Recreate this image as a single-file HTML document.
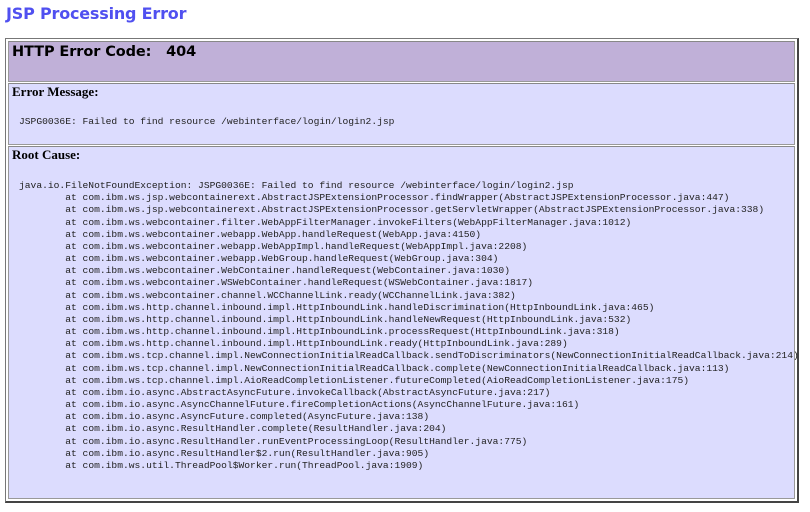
<!DOCTYPE html>
<html><head><style>
body{margin:0;background:#fff;width:810px;height:512px;position:relative;overflow:hidden}
.t{position:absolute;left:6px;top:4px;font:bold 16px "DejaVu Sans","Liberation Sans",sans-serif;color:#5050f0;letter-spacing:-0.2px}
.outer{position:absolute;left:5px;top:38px;width:791px;height:462px;border:1px solid #777;border-right:2px solid #444;border-bottom:2px solid #444;background:#fff}
.c{position:absolute;left:2px;width:787px;border:1px solid #999;border-top-color:#888;box-sizing:border-box}
.h{top:2px;height:41px;background:#c0b0d8}
.r2{top:44px;height:62px;background:#dcdcfe}
.r3{top:107px;height:353px;background:#dcdcfe}
.hh{position:absolute;left:3px;top:2px;font:bold 14.5px "DejaVu Sans","Liberation Sans",sans-serif;color:#000;white-space:pre;letter-spacing:-0.1px}
.lb{position:absolute;left:3px;top:0px;font:bold 13px "Liberation Serif",serif}
pre{position:absolute;left:10px;margin:0;font:9.65px/12.17px "Liberation Mono",monospace;color:#222;tab-size:8}
</style></head><body>
<div class="t">JSP Processing Error</div>
<div class="outer">
<div class="c h"><div class="hh">HTTP Error Code:   404</div></div>
<div class="c r2"><div class="lb">Error Message:</div><pre style="top:32px">JSPG0036E: Failed to find resource /webinterface/login/login2.jsp</pre></div>
<div class="c r3"><div class="lb">Root Cause:</div><pre style="top:33px">java.io.FileNotFoundException: JSPG0036E: Failed to find resource /webinterface/login/login2.jsp
	at com.ibm.ws.jsp.webcontainerext.AbstractJSPExtensionProcessor.findWrapper(AbstractJSPExtensionProcessor.java:447)
	at com.ibm.ws.jsp.webcontainerext.AbstractJSPExtensionProcessor.getServletWrapper(AbstractJSPExtensionProcessor.java:338)
	at com.ibm.ws.webcontainer.filter.WebAppFilterManager.invokeFilters(WebAppFilterManager.java:1012)
	at com.ibm.ws.webcontainer.webapp.WebApp.handleRequest(WebApp.java:4150)
	at com.ibm.ws.webcontainer.webapp.WebAppImpl.handleRequest(WebAppImpl.java:2208)
	at com.ibm.ws.webcontainer.webapp.WebGroup.handleRequest(WebGroup.java:304)
	at com.ibm.ws.webcontainer.WebContainer.handleRequest(WebContainer.java:1030)
	at com.ibm.ws.webcontainer.WSWebContainer.handleRequest(WSWebContainer.java:1817)
	at com.ibm.ws.webcontainer.channel.WCChannelLink.ready(WCChannelLink.java:382)
	at com.ibm.ws.http.channel.inbound.impl.HttpInboundLink.handleDiscrimination(HttpInboundLink.java:465)
	at com.ibm.ws.http.channel.inbound.impl.HttpInboundLink.handleNewRequest(HttpInboundLink.java:532)
	at com.ibm.ws.http.channel.inbound.impl.HttpInboundLink.processRequest(HttpInboundLink.java:318)
	at com.ibm.ws.http.channel.inbound.impl.HttpInboundLink.ready(HttpInboundLink.java:289)
	at com.ibm.ws.tcp.channel.impl.NewConnectionInitialReadCallback.sendToDiscriminators(NewConnectionInitialReadCallback.java:214)
	at com.ibm.ws.tcp.channel.impl.NewConnectionInitialReadCallback.complete(NewConnectionInitialReadCallback.java:113)
	at com.ibm.ws.tcp.channel.impl.AioReadCompletionListener.futureCompleted(AioReadCompletionListener.java:175)
	at com.ibm.io.async.AbstractAsyncFuture.invokeCallback(AbstractAsyncFuture.java:217)
	at com.ibm.io.async.AsyncChannelFuture.fireCompletionActions(AsyncChannelFuture.java:161)
	at com.ibm.io.async.AsyncFuture.completed(AsyncFuture.java:138)
	at com.ibm.io.async.ResultHandler.complete(ResultHandler.java:204)
	at com.ibm.io.async.ResultHandler.runEventProcessingLoop(ResultHandler.java:775)
	at com.ibm.io.async.ResultHandler$2.run(ResultHandler.java:905)
	at com.ibm.ws.util.ThreadPool$Worker.run(ThreadPool.java:1909)</pre></div>
</div>
</body></html>
